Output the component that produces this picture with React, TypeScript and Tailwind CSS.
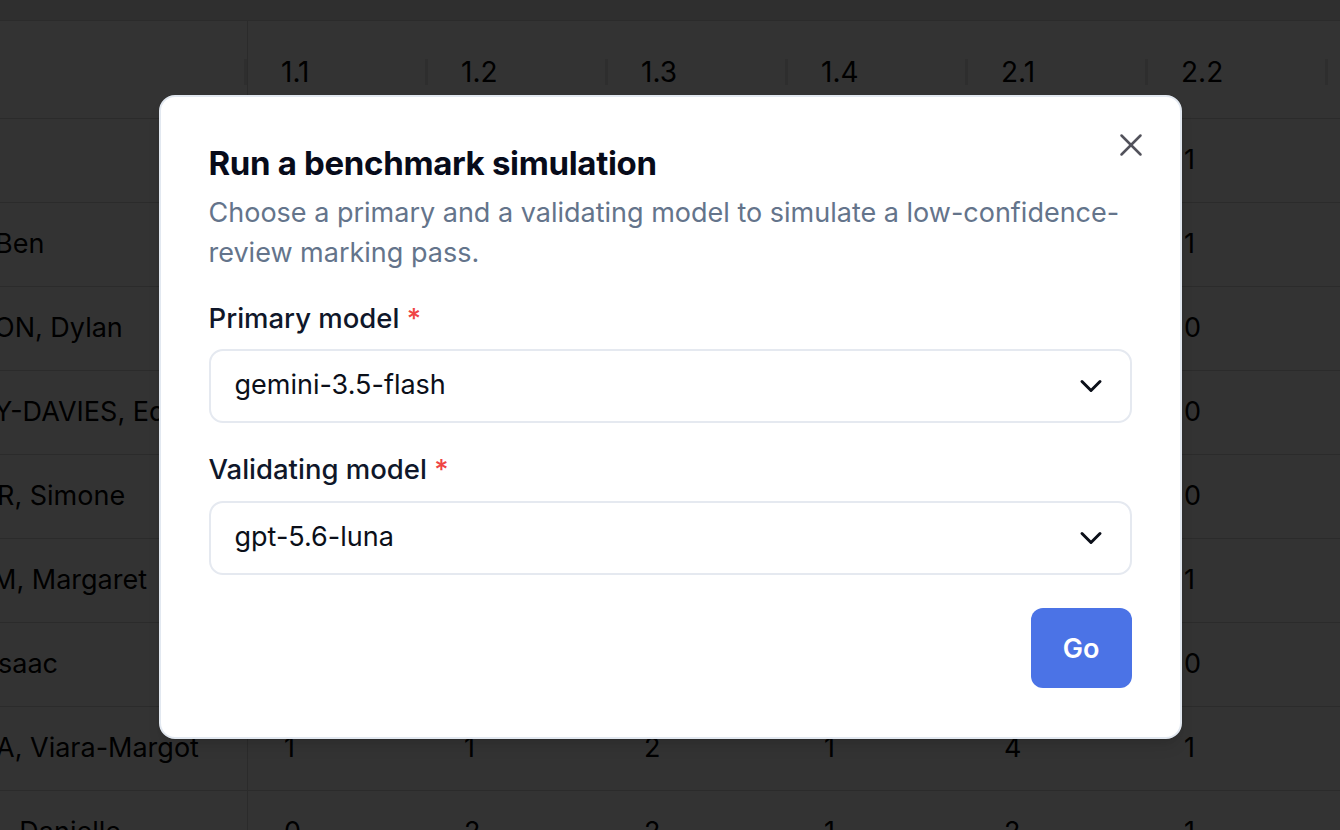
import { ChevronDown, X } from 'lucide-react';

const columns = ['1.1', '1.2', '1.3', '1.4', '2.1', '2.2', '2.3'];

const rows = [
  { name: '', offset: 'ml-0', scores: [1, 2, 1, 0, 3, 1, 2] },
  { name: 'Ben', offset: '-ml-[5px]', scores: [2, 1, 2, 1, 3, 1, 1] },
  { name: 'ON, Dylan', offset: '-ml-[6px]', scores: [1, 1, 1, 0, 2, 0, 1] },
  { name: 'Y-DAVIES, Ed', offset: '-ml-[6px]', scores: [0, 2, 1, 1, 2, 0, 2] },
  { name: 'R, Simone', offset: '-ml-[3px]', scores: [1, 2, 2, 1, 3, 0, 1] },
  { name: 'M, Margaret', offset: '-ml-[8px]', scores: [2, 1, 2, 1, 4, 1, 2] },
  { name: 'saac', offset: '-ml-[2px]', scores: [1, 0, 1, 0, 2, 0, 1] },
  { name: 'A, Viara-Margot', offset: '-ml-[4px]', scores: [1, 1, 2, 1, 4, 1, 2] },
  { name: ', Danielle', offset: 'ml-[4px]', scores: [0, 2, 2, 1, 2, 1, 1] },
];

function SelectBox({ value }: { value: string }) {
  return (
    <div className="flex h-[74px] items-center justify-between rounded-[14px] border-2 border-[#e5e9f0] bg-white pl-[24px] pr-[21px]">
      <span className="text-[27px] text-[#0b0f19]">{value}</span>
      <ChevronDown size={36} strokeWidth={2} className="text-[#0b0f19]" />
    </div>
  );
}

export default function App() {
  return (
    <div className="relative h-[830px] w-[1340px] overflow-hidden bg-white font-['Inter',sans-serif] text-black">
      {/* table behind the dialog */}
      <div className="h-[21px] border-b border-[#d6d6d6] bg-[#ececec]" />
      <div className="flex h-[98px] border-b border-[#d6d6d6]">
        <div className="flex w-[248px] shrink-0 items-center justify-end border-r border-[#d6d6d6] pt-[4px]">
          <div className="h-[26px] w-[3px] bg-[#e4e4e4]" />
        </div>
        {columns.map((col) => (
          <div key={col} className="flex w-[180px] shrink-0 items-center justify-between pl-[33px] pt-[4px]">
            <span className="text-[28px]">{col}</span>
            <div className="h-[26px] w-[3px] bg-[#e4e4e4]" />
          </div>
        ))}
      </div>
      {rows.map((row, i) => (
        <div key={i} className="flex h-[84px] border-b border-[#d6d6d6]">
          <div className="flex w-[248px] shrink-0 items-center overflow-hidden whitespace-nowrap border-r border-[#d6d6d6]">
            <span className={`text-[27px] ${row.offset}`}>{row.name}</span>
          </div>
          {row.scores.map((s, j) => (
            <div key={j} className="flex w-[180px] shrink-0 items-center pl-[36px] text-[27px]">
              {s}
            </div>
          ))}
        </div>
      ))}

      {/* overlay */}
      <div className="absolute inset-0 bg-black/80" />

      {/* dialog */}
      <div className="absolute inset-0 flex items-center justify-center">
        <div className="relative mt-[3px] w-[1023px] rounded-[16px] border-2 border-[#e2e8f0] bg-white px-[48px] pb-[49px] pt-[46px] shadow-lg">
          <button className="absolute right-[30px] top-[29px] text-[#52525b]">
            <X size={38} strokeWidth={1.6} />
          </button>
          <h2 className="text-[33px] font-bold leading-[40px] tracking-[-0.01em] text-[#070b1a]">
            Run a benchmark simulation
          </h2>
          <p className="mt-[10px] text-[27px] leading-[40px] text-[#64748b]">
            Choose a primary and a validating model to simulate a low-confidence-review marking pass.
          </p>
          <div className="mt-[25px] text-[27.5px] font-medium leading-[40px] text-[#0f172a]">
            Primary model <span className="text-[#ef4444]">*</span>
          </div>
          <div className="mt-[11px]">
            <SelectBox value="gemini-3.5-flash" />
          </div>
          <div className="mt-[26px] text-[27.5px] font-medium leading-[40px] text-[#0f172a]">
            Validating model <span className="text-[#ef4444]">*</span>
          </div>
          <div className="mt-[12px]">
            <SelectBox value="gpt-5.6-luna" />
          </div>
          <div className="mt-[33px] flex justify-end">
            <button className="h-[80px] w-[101px] rounded-[12px] bg-[#4b73e6] pt-[4px] text-[27px] font-semibold text-white">
              Go
            </button>
          </div>
        </div>
      </div>
    </div>
  );
}
